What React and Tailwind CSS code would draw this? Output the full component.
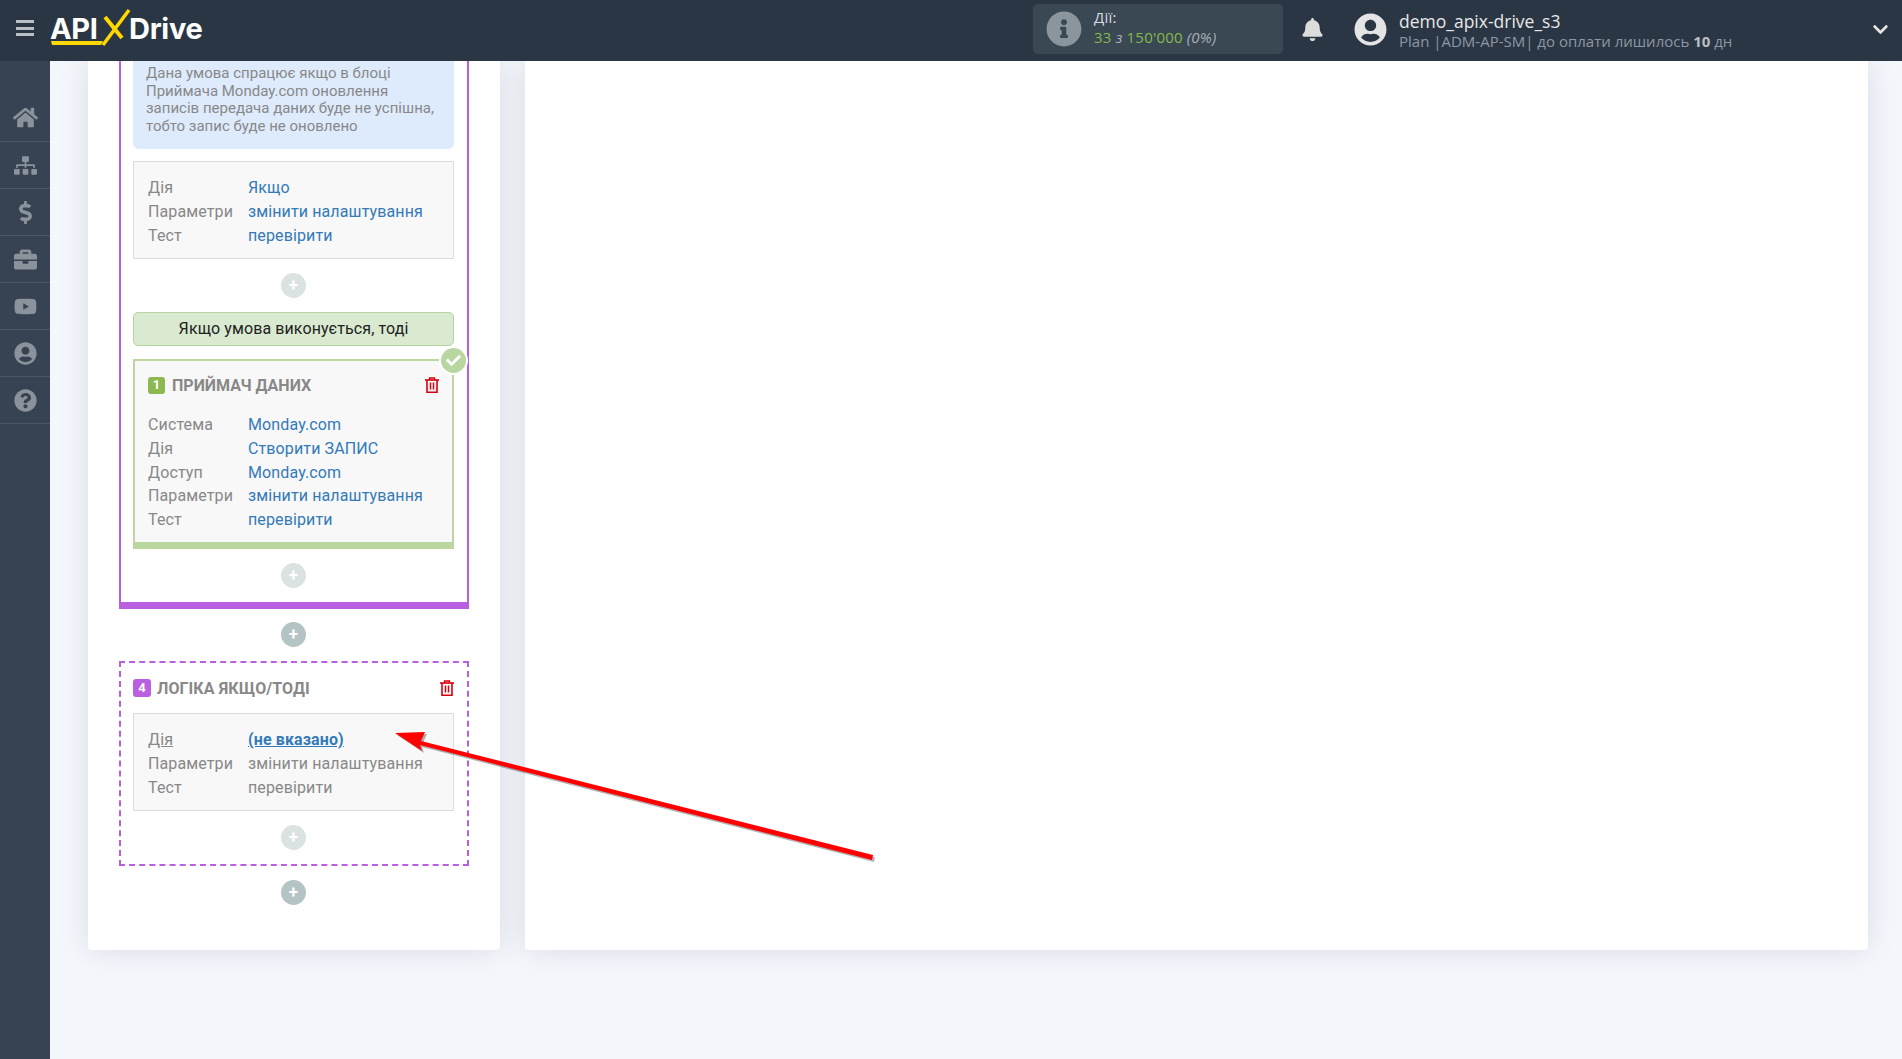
import { FaHome, FaSitemap, FaDollarSign, FaBriefcase, FaYoutube, FaUserCircle, FaQuestionCircle, FaBell, FaInfoCircle, FaChevronDown, FaCheck } from 'react-icons/fa'

const SIDE_ITEMS = [FaSitemap, FaDollarSign, FaBriefcase, FaYoutube, FaUserCircle, FaQuestionCircle]

function Logo() {
  return (
    <div className="relative flex h-[56px] w-[154px] items-center self-start pt-[1px] font-['Inter',sans-serif] text-[29px] leading-none font-bold text-white">
      <span className="w-[51px] tracking-[-0.4px]">API</span>
      <span className="w-[28px]" />
      <span className="tracking-[-0.3px]">Drive</span>
      {/* yellow X and underline */}
      <svg className="absolute top-0 left-0 h-[56px] w-[90px]" viewBox="0 0 90 56">
        <path d="M55 17 L72 38" stroke="#ffd800" strokeWidth="4" fill="none" />
        <path d="M79 10 L53 45" stroke="#ffd800" strokeWidth="3.5" fill="none" />
        <path d="M1 41 H53 L51 45 H2 Z" fill="#ffd800" />
      </svg>
    </div>
  )
}

function Plus({ dark }) {
  return (
    <div className={`flex h-[25px] w-[25px] items-center justify-center rounded-full text-[17px] leading-none font-bold text-white ${dark ? 'bg-[#b4c3c3]' : 'bg-[#dbe2e2]'}`}>
      +
    </div>
  )
}

function Rows({ rows }) {
  return (
    <div className="grid grid-cols-[100px_1fr] text-[16px] leading-[23.8px] tracking-[0.12px]">
      {rows.map(([label, value]) => (
        <div key={label} className="contents">
          <span className="text-[#888]">{label}</span>
          <span className="text-[#337ab7]">{value}</span>
        </div>
      ))}
    </div>
  )
}

function Trash() {
  return (
    <svg className="block h-[16px] w-[14px]" viewBox="0 0 14 16" fill="none" stroke="#d8000c">
      <path d="M0 3H14" strokeWidth="1.6" />
      <path d="M4.5 3V1H9.5V3" strokeWidth="1.4" />
      <path d="M2 3V15.2H12V3" strokeWidth="1.6" />
      <path d="M5.5 5.5V12.5M8.5 5.5V12.5" strokeWidth="1.5" />
    </svg>
  )
}

export default function App() {
  return (
    <div className="flex h-[1059px] flex-col overflow-hidden bg-[#f4f7fc] font-['Roboto',sans-serif]">
      {/* Top bar */}
      <header className="z-10 flex h-[61px] shrink-0 items-center bg-[#2b3644] font-['Open_Sans',sans-serif]">
        <div className="mb-[5px] flex w-[50px] justify-center">
          <div className="flex h-[16px] w-[18px] flex-col justify-between">
            <div className="h-[3px] bg-[#b8bfc6]" />
            <div className="h-[3px] bg-[#b8bfc6]" />
            <div className="h-[3px] bg-[#b8bfc6]" />
          </div>
        </div>
        <Logo />
        <div className="mb-[3px] ml-[829px] flex h-[50px] w-[250px] items-center rounded-[5px] bg-[#3a4854] pl-[13px]">
          <FaInfoCircle className="text-[36px] text-[#8a959d]" />
          <div className="ml-[12px] pb-[3px] text-[15px] leading-[19.5px] tracking-[0.2px]">
            <div className="text-[#d8dde0]">Дії:</div>
            <div className="text-[#85b84a]">33 <i className="text-[#a9b0b6]">з</i> 150'000 <i className="text-[#a9b0b6]">(0%)</i></div>
          </div>
        </div>
        <FaBell className="mb-[2px] ml-[18px] text-[23px] text-[#dcdcdc]" />
        <FaUserCircle className="mb-[2px] ml-[30px] text-[33px] text-[#e4e4e4]" />
        <div className="ml-[12px]">
          <div className="text-[17.5px] leading-[22px] text-[#e6e6e6]">demo_apix-drive_s3</div>
          <div className="text-[15px] leading-[19px] text-[#8c98a4]">Plan |ADM-AP-SM| до оплати лишилось <b className="font-bold text-[#b8bfc6]">10</b> дн</div>
        </div>
        <FaChevronDown className="mr-[13px] mb-[2px] ml-auto text-[17px] text-[#e6e6e6]" />
      </header>

      <div className="flex min-h-0 flex-1">
        {/* Sidebar */}
        <aside className="w-[50px] shrink-0 bg-[#374352]">
          <div className="flex h-[81px] items-end justify-center border-b border-[#4a5663] pb-[11px]">
            <FaHome className="text-[25px] text-[#8a929b]" />
          </div>
          {SIDE_ITEMS.map((Icon, i) => (
            <div key={i} className="flex h-[47px] items-center justify-center border-b border-[#4a5663]">
              <Icon className="text-[23px] text-[#8a929b]" />
            </div>
          ))}
        </aside>

        {/* Content */}
        <main className="flex flex-1 items-start gap-[25px] pr-[34px] pl-[38px]">
          <section className="flex h-[889px] w-[412px] shrink-0 flex-col items-center rounded-b-[4px] bg-white px-[31px] shadow-[0_0_30px_rgba(100,110,120,0.18)]">
            {/* Open block, scrolled under the header */}
            <div className="w-[350px] border-x-2 border-b-[7px] border-[#b95fe0] pr-[13px] pb-[14px] pl-[12px]">
              <div className="h-[88px] rounded-b-[6px] bg-[#deebfd] pt-[4px] pr-[16px] pl-[13px] text-[15px] leading-[17.6px] text-[#888]">
                Дана умова спрацює якщо в блоці Приймача Monday.com оновлення записів передача даних буде не успішна, тобто запис буде не оновлено
              </div>
              <div className="mt-[12px] h-[98px] border border-[#ddd] bg-[#f8f8f8] pt-[14px] pl-[14px]">
                <Rows rows={[['Дія', 'Якщо'], ['Параметри', 'змінити налаштування'], ['Тест', 'перевірити']]} />
              </div>
              <div className="mt-[14px] flex justify-center"><Plus /></div>
              <div className="mt-[14px] flex h-[34px] items-center justify-center rounded-[5px] border border-[#b9d3a0] bg-[#d9ead0] text-[16px] tracking-[0.1px] text-[#222]">
                Якщо умова виконується, тоді
              </div>
              <div className="relative mt-[13px] h-[190px] border-2 border-b-[7px] border-[#bcd69f] bg-[#f8f8f8] pt-[15px] pl-[13px]">
                <div className="absolute -top-[15px] -right-[16px] flex h-[29px] w-[29px] items-center justify-center rounded-full border-2 border-white bg-[#b8d6a0]">
                  <FaCheck className="text-[15px] text-white" />
                </div>
                <div className="flex h-[18px] items-center pr-[13px]">
                  <span className="flex h-[17px] w-[17px] items-center justify-center rounded-[3px] bg-[#8bb84f] text-[13px] font-bold text-white">1</span>
                  <span className="ml-[7px] pt-[1px] text-[16px] font-bold text-[#888]">ПРИЙМАЧ ДАНИХ</span>
                  <span className="ml-auto"><Trash /></span>
                </div>
                <div className="mt-[19px]">
                  <Rows rows={[['Система', 'Monday.com'], ['Дія', 'Створити ЗАПИС'], ['Доступ', 'Monday.com'], ['Параметри', 'змінити налаштування'], ['Тест', 'перевірити']]} />
                </div>
              </div>
              <div className="mt-[14px] flex justify-center"><Plus /></div>
            </div>

            <div className="mt-[13px] mr-[1px]"><Plus dark /></div>

            {/* Unconfigured block */}
            <div className="mt-[14px] h-[205px] w-[350px] border-2 border-dashed border-[#b95fe0] pt-[15px] pr-[13px] pl-[12px]">
              <div className="flex h-[20px] items-center">
                <span className="flex h-[18px] w-[18px] items-center justify-center rounded-[3px] bg-[#b95fe0] text-[13px] font-bold text-white">4</span>
                <span className="ml-[6px] pt-[1px] text-[16px] font-bold tracking-[0.1px] text-[#888]">ЛОГІКА ЯКЩО/ТОДІ</span>
                <span className="ml-auto"><Trash /></span>
              </div>
              <div className="mt-[15px] h-[98px] border border-[#ddd] bg-[#f8f8f8] pt-[14px] pl-[14px]">
                <div className="grid grid-cols-[100px_1fr] text-[16px] leading-[23.8px] tracking-[0.12px]">
                  <span className="text-[#888] underline">Дія</span>
                  <span className="font-bold text-[#337ab7] underline">(не вказано)</span>
                  <span className="text-[#888]">Параметри</span>
                  <span className="text-[#888]">змінити налаштування</span>
                  <span className="text-[#888]">Тест</span>
                  <span className="text-[#888]">перевірити</span>
                </div>
              </div>
              <div className="mt-[14px] flex justify-center"><Plus /></div>
            </div>

            <div className="mt-[14px] mr-[1px]"><Plus dark /></div>
          </section>

          <section className="h-[889px] flex-1 rounded-b-[4px] bg-white shadow-[0_0_30px_rgba(100,110,120,0.18)]" />
        </main>
      </div>

      {/* Annotation arrow */}
      <svg className="pointer-events-none absolute top-0 left-0 z-20 h-[1059px] w-[1902px]" viewBox="0 0 1902 1059">
        <path d="M395 733 L425 732 L421 741 L873 855 L872 860 L420 745 L422 751 Z" fill="#000" opacity="0.3" transform="translate(2 2)" />
        <path d="M395 733 L425 732 L421 741 L873 855 L872 860 L420 745 L422 751 Z" fill="#ff0000" />
      </svg>
    </div>
  )
}
